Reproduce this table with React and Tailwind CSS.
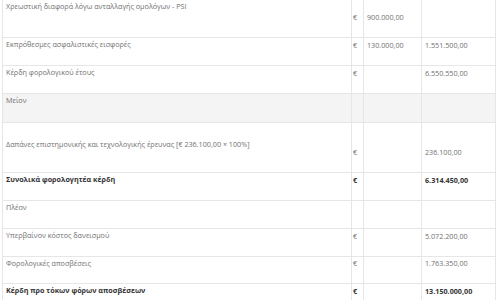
export default function App() {
  const rows = [
    { label: "Χρεωστική διαφορά λόγω ανταλλαγής ομολόγων - PSI", eur: "€", a: "900.000,00", b: "", h: 37, lp: 1 },
    { label: "Εκπρόθεσμες ασφαλιστικές εισφορές", eur: "€", a: "130.000,00", b: "1.551.500,00", h: 28 },
    { label: "Κέρδη φορολογικού έτους", eur: "€", a: "", b: "6.550.550,00", h: 28 },
    { label: "Μείον", eur: "", a: "", b: "", h: 29, gray: true },
    { label: "Δαπάνες επιστημονικής και τεχνολογικής έρευνας [€ 236.100,00 × 100%]", eur: "€", a: "", b: "236.100,00", h: 50, lp: 16 },
    { label: "Συνολικά φορολογητέα κέρδη", eur: "€", a: "", b: "6.314.450,00", h: 28, bold: true },
    { label: "Πλέον", eur: "", a: "", b: "", h: 28 },
    { label: "Υπερβαίνον κόστος δανεισμού", eur: "€", a: "", b: "5.072.200,00", h: 28 },
    { label: "Φορολογικές αποσβέσεις", eur: "€", a: "", b: "1.763.350,00", h: 27 },
    { label: "Κέρδη προ τόκων φόρων αποσβέσεων", eur: "€", a: "", b: "13.150.000,00", h: 28, bold: true },
  ];
  return (
    <div className="w-[500px] h-[300px] overflow-hidden bg-white pl-[2px] pr-[4px]" style={{ fontFamily: '"Open Sans", "Noto Sans", sans-serif' }}>
      <div className="w-[494px] border-x border-[#e6e6e6]">
        {rows.map((r, i) => (
          <div
            key={i}
            className={`grid grid-cols-[349px_12px_58px_1fr] text-[7.2px] leading-[10px] ${i > 0 ? "border-t border-[#e6e6e6]" : ""} ${r.gray ? "bg-[#f4f4f4]" : ""} ${r.bold ? "font-bold text-[#333]" : "text-[#707070]"}`}
            style={{ height: r.h }}
          >
            <div className="pl-[3px] border-r border-[#e6e6e6]" style={{ paddingTop: r.lp ?? 1 }}>{r.label}</div>
            <div className="pl-[1px] border-r border-[#e6e6e6] flex items-end pb-[15px]">{r.eur}</div>
            <div className="pl-[3px] border-r border-[#e6e6e6] flex items-end pb-[15px]">{r.a}</div>
            <div className="pl-[3px] flex items-end pb-[15px]">{r.b}</div>
          </div>
        ))}
      </div>
    </div>
  );
}
